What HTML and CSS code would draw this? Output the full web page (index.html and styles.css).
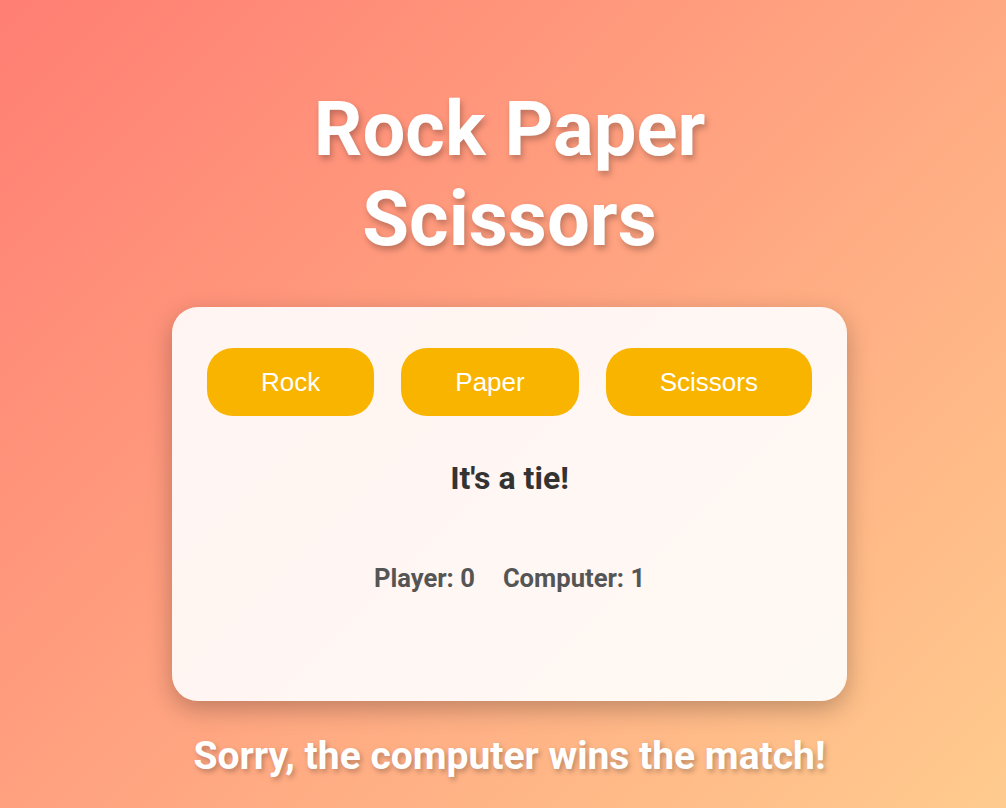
FILE: index.html
```html
<!DOCTYPE html>
<html lang="en">
<head>
<meta charset="utf-8">
<title>Rock Paper Scissors</title>
<link rel="stylesheet" href="styles.css">
</head>
<body>
<main class="app">
  <h1 class="title">Rock Paper Scissors</h1>
  <section class="card">
    <div class="choices">
      <button class="choice">Rock</button>
      <button class="choice">Paper</button>
      <button class="choice">Scissors</button>
    </div>
    <p class="result">It's a tie!</p>
    <p class="score"><span>Player: 0</span><span>Computer: 1</span></p>
  </section>
  <p class="final">Sorry, the computer wins the match!</p>
</main>
</body>
</html>
```

FILE: styles.css
```css
html, body {
  height: 100%;
}
body {
  margin: 0;
  background: linear-gradient(135deg, #ff7e73 0%, #ffcb8e 100%);
  font-family: Roboto, "Liberation Sans", sans-serif;
  overflow: hidden;
}
.app {
  width: 675px;
  margin: 0 auto;
  padding-left: 13px;
  padding-top: 84px;
  display: flex;
  flex-direction: column;
  align-items: stretch;
  text-align: center;
}
.title {
  margin: 0;
  color: #fff;
  font-size: 76px;
  line-height: 90px;
  font-weight: 700;
  text-shadow: 2px 4px 6px rgba(0, 0, 0, 0.25);
}
.card {
  margin-top: 43px;
  height: 394px;
  box-sizing: border-box;
  padding-top: 41px;
  background: rgba(255, 255, 255, 0.9);
  border-radius: 26px;
  box-shadow: 0 8px 24px rgba(0, 0, 0, 0.25);
}
.choices {
  display: flex;
  justify-content: center;
  gap: 27px;
}
.choice {
  font-family: "Liberation Sans", Arial, sans-serif;
  font-size: 26px;
  color: #fff;
  background: #f9b400;
  border: none;
  border-radius: 26px;
  height: 68px;
  padding: 0 54px;
}
.result {
  margin: 43px 0 0;
  font-size: 32px;
  font-weight: 700;
  color: #333;
}
.score {
  margin: 66px 0 0;
  font-size: 25.6px;
  font-weight: 700;
  color: #555;
  display: flex;
  justify-content: center;
  gap: 28px;
}
.final {
  margin: 32px 0 0;
  font-size: 39px;
  font-weight: 700;
  color: #fff;
  text-shadow: 2px 3px 5px rgba(0, 0, 0, 0.25);
}
```
